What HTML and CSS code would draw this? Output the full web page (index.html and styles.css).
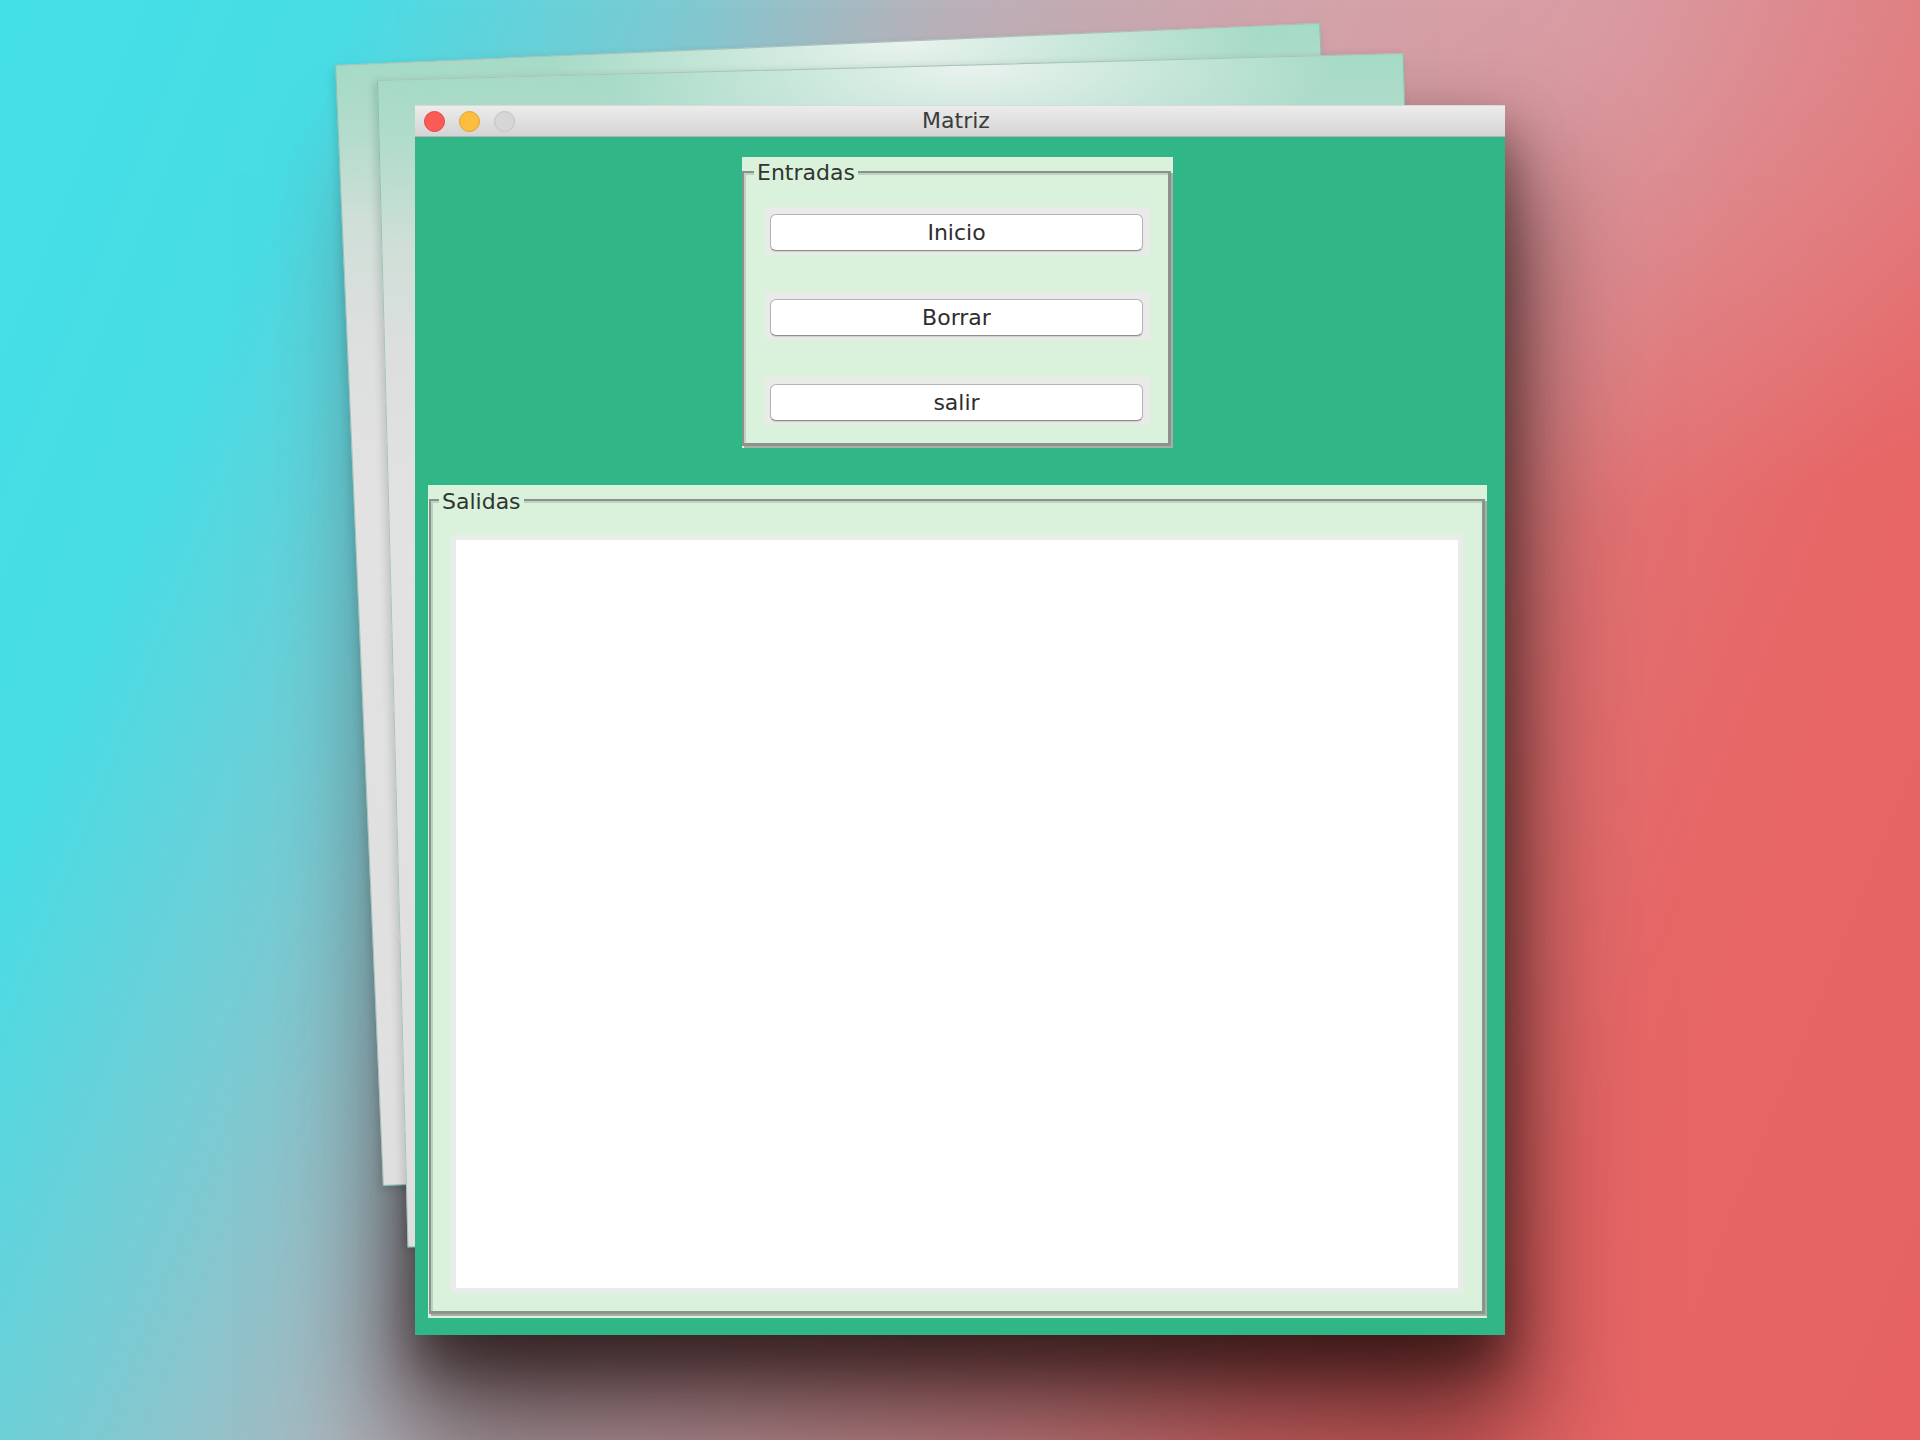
FILE: index.html
```html
<!DOCTYPE html>
<html lang="es">
<head>
<meta charset="utf-8">
<title>Matriz</title>
<link rel="stylesheet" href="styles.css">
</head>
<body>
<div class="stage">
  <div class="sheet sheet-back"></div>
  <div class="sheet sheet-mid"></div>
  <div class="window">
    <div class="titlebar">
      <div class="lights">
        <span class="light light-close"></span>
        <span class="light light-min"></span>
        <span class="light light-max"></span>
      </div>
      <div class="title">Matriz</div>
      <div class="spacer"></div>
    </div>
    <div class="content">
      <div class="panel panel-in">
        <div class="group group-in">
          <div class="legend">Entradas</div>
          <div class="btn-wrap"><button class="btn">Inicio</button></div>
          <div class="btn-wrap"><button class="btn">Borrar</button></div>
          <div class="btn-wrap"><button class="btn">salir</button></div>
        </div>
      </div>
      <div class="panel panel-out">
        <div class="group group-out">
          <div class="legend">Salidas</div>
          <div class="text-frame"><div class="text-area"></div></div>
        </div>
      </div>
    </div>
  </div>
</div>
</body>
</html>
```

FILE: styles.css
```css
html, body {
  margin: 0;
  padding: 0;
}

body {
  width: 1920px;
  height: 1440px;
  overflow: hidden;
  font-family: "DejaVu Sans", "Liberation Sans", sans-serif;
  background:
    radial-gradient(ellipse 820px 520px at 1520px 0px, rgba(216, 162, 170, 0.7), rgba(216, 162, 170, 0)),
    linear-gradient(112deg, #44e0e8 0%, #48dce4 14%, #78ccd4 26%, #b1b5bd 38%, #cba5ab 52%, #da8e92 64%, #e37273 73%, #e76666 82%, #e76363 100%);
}

.stage {
  position: relative;
  height: 1440px;
  box-sizing: border-box;
  padding: 105px 0 0 415px;
}

/* stacked sheets behind the window */
.sheet {
  position: absolute;
  transform-origin: 0 0;
  box-sizing: border-box;
  border: 1px solid rgba(100, 160, 140, 0.45);
  background:
    radial-gradient(ellipse 36% 9% at 58% 0%, rgba(238, 244, 241, 0.95), rgba(238, 244, 241, 0)),
    linear-gradient(180deg, #a5dbc6 0%, #b3dccc 6%, #cfdfd8 14%, #dddfde 24%, #e2e2e2 40%, #dfdfdf 100%);
}

.sheet-back {
  left: 335px;
  top: 65px;
  width: 986px;
  height: 1122px;
  transform: rotate(-2.45deg);
  box-shadow: -2px 4px 10px rgba(0, 0, 0, 0.12);
}

.sheet-mid {
  left: 377px;
  top: 80px;
  width: 1027px;
  height: 1168px;
  transform: rotate(-1.5deg);
  box-shadow: -3px 2px 8px rgba(0, 0, 0, 0.14);
}

/* main window */
.window {
  position: relative;
  width: 1090px;
  height: 1230px;
  display: flex;
  flex-direction: column;
}

/* the window's drop shadow falls on the desktop, under the sheets */
.window::before {
  content: "";
  position: absolute;
  left: 0;
  top: 0;
  right: 0;
  bottom: 0;
  z-index: -1;
  box-shadow:
    0 30px 50px rgba(20, 5, 5, 0.55),
    0 85px 110px 18px rgba(35, 10, 10, 0.62);
}

.titlebar {
  height: 32px;
  box-sizing: border-box;
  display: grid;
  grid-template-columns: 1fr auto 1fr;
  align-items: center;
  background: linear-gradient(180deg, #ececec 0%, #e0e0e0 50%, #d4d4d4 100%);
  border-top: 1px solid #d9d9d9;
  border-bottom: 1px solid #b1b1b1;
}

.lights {
  display: flex;
  gap: 14px;
  padding-left: 9px;
}

.light {
  width: 21px;
  height: 21px;
  border-radius: 50%;
  box-sizing: border-box;
}

.light-close {
  background: #fc5a55;
  border: 1px solid #e0443f;
}

.light-min {
  background: #fdbd3f;
  border: 1px solid #dea235;
}

.light-max {
  background: #d6d6d6;
  border: 1px solid #c3c3c3;
}

.title {
  font-size: 22px;
  color: #3c3c3c;
  line-height: 26px;
  margin-left: -8px;
}

.content {
  flex: 1;
  background: #31b688;
  padding: 20px 18px 17px 13px;
  display: flex;
  flex-direction: column;
  gap: 37px;
}

.panel {
  background: #daf2dc;
  box-sizing: border-box;
}

.panel-in {
  align-self: center;
  width: 431px;
  padding: 14px 2px 2px 0;
}

.panel-out {
  flex: 1;
  display: flex;
  flex-direction: column;
  padding: 14px 2px 4px 1px;
}

.group {
  display: flex;
  flex-direction: column;
  border-top: 2px solid #87928a;
  border-left: 2px solid #87928a;
  border-right: 3px solid #8b948c;
  border-bottom: 3px solid #8b948c;
  box-shadow: inset 2px 2px 0 #c0d1c1, 2px 2px 0 #a6b0a7;
}

.legend {
  align-self: flex-start;
  padding: 0 3px;
  background: #daf2dc;
  font-size: 22px;
  line-height: 26px;
  color: #303530;
}

.group-in .legend {
  margin: -13px 0 0 -11px;
}

.group-out .legend {
  margin: -12px 0 0 -12px;
}

.group-in {
  padding: 0 18px 18px 21px;
}

.btn-wrap {
  background: #e8ebe8;
  height: 48px;
  box-sizing: border-box;
  padding: 7px 7px 4px 5px;
  margin-top: 37px;
}

.group-in .legend + .btn-wrap {
  margin-top: 21px;
}

.btn {
  display: block;
  width: 100%;
  height: 37px;
  margin: 0;
  padding: 0;
  background: #ffffff;
  border: 1px solid #b4b4b4;
  border-bottom-color: #8e8e8e;
  border-radius: 6px;
  box-shadow: 0 1px 1px rgba(0, 0, 0, 0.12);
  font-family: "DejaVu Sans", "Liberation Sans", sans-serif;
  font-size: 22px;
  color: #2e2e2e;
  line-height: 34px;
  text-align: center;
}

.group-out {
  flex: 1;
  padding: 0 19px 18px 20px;
}

.text-frame {
  flex: 1;
  margin-top: 20px;
  background: #e9ece9;
  padding: 5px;
  display: flex;
}

.text-area {
  flex: 1;
  background: #ffffff;
}
```
